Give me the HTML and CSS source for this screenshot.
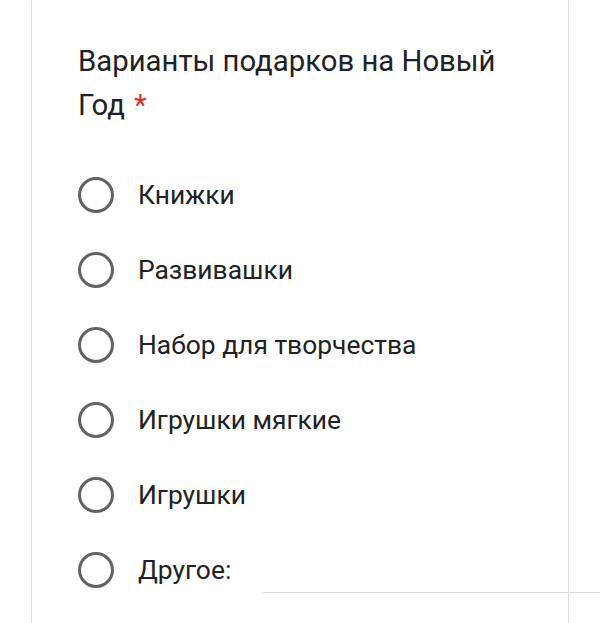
FILE: index.html
```html
<!DOCTYPE html>
<html lang="ru">
<head>
<meta charset="utf-8">
<link rel="stylesheet" href="styles.css">
</head>
<body>
<div class="card">
  <div class="title">Варианты подарков на Новый Год<span class="req">*</span></div>
  <div class="options">
    <div class="opt"><span class="radio"></span><span class="label">Книжки</span></div>
    <div class="opt"><span class="radio"></span><span class="label">Развивашки</span></div>
    <div class="opt"><span class="radio"></span><span class="label">Набор для творчества</span></div>
    <div class="opt"><span class="radio"></span><span class="label">Игрушки мягкие</span></div>
    <div class="opt"><span class="radio"></span><span class="label">Игрушки</span></div>
    <div class="opt other"><span class="radio"></span><span class="label">Другое:</span><span class="input"></span></div>
  </div>
</div>
</body>
</html>
```
FILE: styles.css
```css
html, body {
  margin: 0;
  padding: 0;
  background: #fff;
  overflow: hidden;
  width: 600px;
  height: 623px;
}
body {
  font-family: Roboto, "Noto Sans", sans-serif;
  color: #202124;
}
.card {
  margin: -12px 0 0 31px;
  width: 538px;
  height: 680px;
  border: 1.5px solid #dadce0;
  border-radius: 14px;
  box-sizing: border-box;
  padding: 50px 0 0 46px;
}
.title {
  font-size: 29.3px;
  line-height: 44px;
  width: 450px;
}
.req {
  display: inline-block;
  color: #d93025;
  margin-left: 9px;
}
.options {
  margin-top: 50px;
  display: flex;
  flex-direction: column;
  gap: 39px;
}
.opt {
  display: flex;
  align-items: center;
  height: 36px;
}
.radio {
  width: 36px;
  height: 36px;
  box-sizing: border-box;
  border: 3.5px solid #5f6368;
  border-radius: 50%;
  flex: none;
}
.label {
  margin-left: 24px;
  font-size: 26.4px;
}
.other { position: relative; }
.input {
  position: absolute;
  left: 185px;
  top: 40px;
  width: 360px;
  border-bottom: 1.5px solid #dadce0;
}
```
